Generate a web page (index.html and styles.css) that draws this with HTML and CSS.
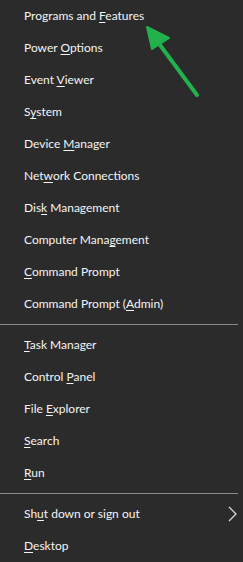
FILE: index.html
```html
<!DOCTYPE html>
<html lang="en">
<head>
    <meta charset="UTF-8">
    <meta name="viewport" content="width=device-width, initial-scale=1.0">
    <title>Quick Link Menu</title>
    <link rel="stylesheet" href="styles.css">
</head>
<body>

    <!-- Menu Win+X -->
    <nav class="winx">
        <ul class="grupo">
            <li>Programs and <u>F</u>eatures</li>
            <li>Power <u>O</u>ptions</li>
            <li>Event <u>V</u>iewer</li>
            <li>S<u>y</u>stem</li>
            <li>Device <u>M</u>anager</li>
            <li>Net<u>w</u>ork Connections</li>
            <li>Dis<u>k</u> Management</li>
            <li>Computer Mana<u>g</u>ement</li>
            <li><u>C</u>ommand Prompt</li>
            <li>Command Prompt (<u>A</u>dmin)</li>
        </ul>
        <hr class="sep">
        <ul class="grupo">
            <li><u>T</u>ask Manager</li>
            <li>Control <u>P</u>anel</li>
            <li>File <u>E</u>xplorer</li>
            <li><u>S</u>earch</li>
            <li><u>R</u>un</li>
        </ul>
        <hr class="sep">
        <ul class="grupo">
            <li class="sub">
                <span>Sh<u>u</u>t down or sign out</span>
                <svg class="seta" width="10" height="16" viewBox="0 0 10 16">
                    <polyline points="1,1 8,8 1,15" fill="none" stroke="#d8d8d8" stroke-width="1.3"/>
                </svg>
            </li>
            <li><u>D</u>esktop</li>
        </ul>
    </nav>

    <!-- Seta verde -->
    <svg class="destaque" width="60" height="75" viewBox="0 0 60 75">
        <line x1="15" y1="20" x2="52" y2="70" stroke="#22b14c" stroke-width="4" stroke-linecap="round"/>
        <polygon points="2,2 24,13 7,24" fill="#22b14c" stroke="#22b14c" stroke-width="2" stroke-linejoin="round"/>
    </svg>

</body>
</html>
```

FILE: styles.css
```css
/* Base */
html, body {
    margin: 0;
    padding: 0;
    background-color: #2b2b2b;
}

body {
    width: 243px;
    height: 562px;
    position: relative;
    overflow: hidden;
    font-family: "Lato", "Noto Sans", sans-serif;
    font-size: 12px;
    color: #f4f4f4;
}

/* Menu */
.winx {
    display: flex;
    flex-direction: column;
}

.grupo {
    list-style: none;
    margin: 0;
    padding: 0;
}

.grupo li {
    height: 32px;
    line-height: 32px;
    padding-left: 24px;
    padding-right: 5px;
    white-space: nowrap;
}

.grupo u {
    text-decoration-thickness: 1px;
    text-underline-offset: 2px;
}

.sub {
    display: flex;
    align-items: center;
    justify-content: space-between;
}

.sep {
    margin: 4px 5px 4px 0;
    border: none;
    height: 1px;
    background-color: #8a8a8a;
}

/* Seta verde por cima do menu */
.destaque {
    position: absolute;
    left: 145px;
    top: 25px;
}
```
